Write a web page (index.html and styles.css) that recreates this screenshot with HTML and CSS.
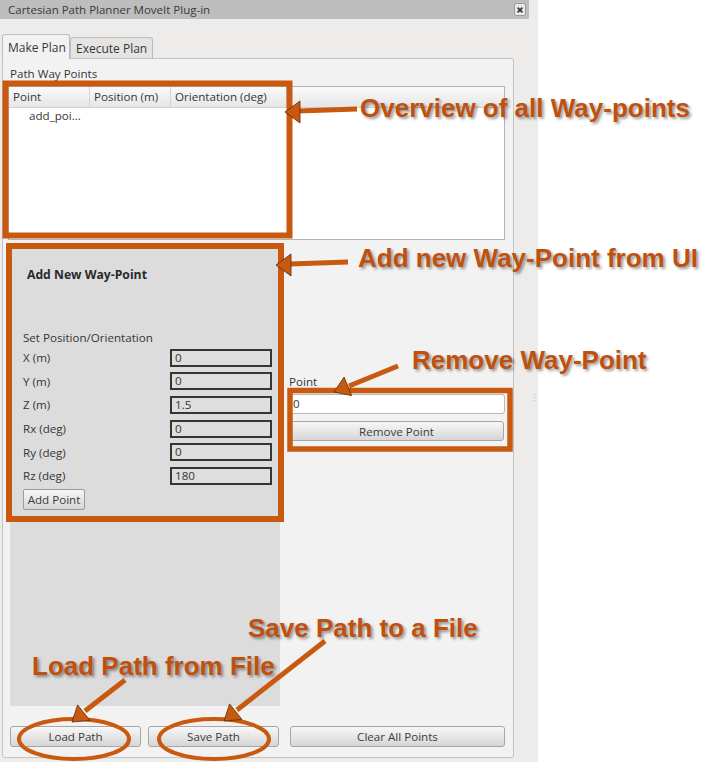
FILE: index.html
```html
<!DOCTYPE html>
<html lang="en">
<head>
    <meta charset="UTF-8">
    <meta name="viewport" content="width=device-width, initial-scale=1.0">
    <title>Cartesian Path Planner MoveIt Plug-in</title>
    <link rel="stylesheet" href="styles.css">
</head>
<body>
    <div class="window">
        <div class="titlebar">
            <span class="title">Cartesian Path Planner MoveIt Plug-in</span>
            <span class="close">
                <svg viewBox="0 0 10 10" width="8" height="8">
                    <path d="M2 2 L8 8 M8 2 L2 8" stroke="#333" stroke-width="2"/>
                </svg>
            </span>
        </div>

        <div class="tabs">
            <div class="tab active">Make Plan</div>
            <div class="tab">Execute Plan</div>
        </div>

        <div class="pane">
            <div class="group-title">Path Way Points</div>

            <div class="tree">
                <div class="tree-header">
                    <div class="col col-point">Point</div>
                    <div class="col col-pos">Position (m)</div>
                    <div class="col col-orient">Orientation (deg)</div>
                    <div class="col col-rest"></div>
                </div>
                <div class="tree-row">add_poi...</div>
            </div>

            <div class="lower">
                <div class="add-panel">
                    <div class="add-title">Add New Way-Point</div>
                    <div class="section-label">Set Position/Orientation</div>
                    <div class="coord-grid">
                        <span>X (m)</span><div class="coord-input">0</div>
                        <span>Y (m)</span><div class="coord-input">0</div>
                        <span>Z (m)</span><div class="coord-input">1.5</div>
                        <span>Rx (deg)</span><div class="coord-input">0</div>
                        <span>Ry (deg)</span><div class="coord-input">0</div>
                        <span>Rz (deg)</span><div class="coord-input">180</div>
                    </div>
                    <button class="btn btn-small">Add Point</button>
                </div>

                <div class="remove-col">
                    <div class="field-label">Point</div>
                    <div class="line-edit">0</div>
                    <button class="btn btn-wide">Remove Point</button>
                </div>

                <div class="grip">⋮</div>
            </div>

            <div class="bottom-buttons">
                <button class="btn btn-load">Load Path</button>
                <button class="btn btn-save">Save Path</button>
                <button class="btn btn-clear">Clear All Points</button>
            </div>
        </div>
    </div>

    <!-- callout marks drawn over the dialog -->
    <svg class="marks" width="709" height="762" viewBox="0 0 709 762">
        <g fill="none" stroke="#c8590f" stroke-width="6">
            <rect x="5.5" y="83.5" width="284" height="152"/>
            <rect x="9" y="246" width="272" height="273"/>
        </g>
        <rect x="290" y="390.5" width="220" height="58.5" fill="none" stroke="#c8590f" stroke-width="5.5"/>
        <g fill="none" stroke="#c8590f" stroke-width="4">
            <ellipse cx="74" cy="739" rx="55" ry="20"/>
            <ellipse cx="214" cy="739" rx="55" ry="20"/>
        </g>
        <g stroke="#c8590f" stroke-width="5" stroke-linecap="butt">
            <line x1="357" y1="109" x2="298" y2="111"/>
            <line x1="348" y1="262" x2="290" y2="264"/>
            <line x1="398" y1="366" x2="349" y2="386"/>
            <line x1="325" y1="641" x2="237" y2="710"/>
            <line x1="125" y1="680" x2="85" y2="711"/>
        </g>
        <g fill="#c8590f" stroke="#5a2a08" stroke-width="0.8" stroke-linejoin="round">
            <polygon points="285,112 300,101 300,123"/>
            <polygon points="276,265 291,254 291,276"/>
            <polygon points="334,392 351.7,395.6 344.1,377.1"/>
            <polygon points="224,721 242,719.5 229.6,703.9"/>
            <polygon points="72,722 90,720.5 77.6,704.9"/>
        </g>
    </svg>

    <div class="callout callout-overview">Overview of all Way-points</div>
    <div class="callout callout-add">Add new Way-Point from UI</div>
    <div class="callout callout-remove">Remove Way-Point</div>
    <div class="callout callout-save">Save Path to a File</div>
    <div class="callout callout-load">Load Path from File</div>
</body>
</html>
```

FILE: styles.css
```css
body {
    margin: 0;
    background: white;
    font-family: "Open Sans", "Noto Sans", sans-serif;
    font-size: 11.6px;
    color: #363636;
    position: relative;
    width: 709px;
    height: 762px;
    overflow: hidden;
}

.window {
    width: 538px;
    height: 762px;
    background: #edeceb;
}

/* title bar */
.titlebar {
    width: 529px;
    height: 19px;
    background: #bdbdbd;
    display: flex;
    align-items: center;
    justify-content: space-between;
}

.title {
    padding-left: 8px;
    font-size: 11.5px;
    color: #3a3a3a;
}

.close {
    width: 10px;
    height: 11px;
    margin-right: 3px;
    border: 1px solid #9a9a9a;
    border-radius: 2px;
    background: #e8e8e8;
    display: flex;
    align-items: center;
    justify-content: center;
}

/* tabs */
.tabs {
    display: flex;
    align-items: flex-end;
    margin-top: 14px;
    padding-left: 2px;
    height: 25px;
}

.tab {
    height: 21px;
    line-height: 21px;
    padding: 0 5px;
    border: 1px solid #bdbdbd;
    border-bottom: none;
    border-radius: 3px 3px 0 0;
    background: #e5e4e3;
    box-sizing: border-box;
    width: 83px;
    white-space: nowrap;
    font-size: 12px;
}

.tab.active {
    height: 25px;
    line-height: 25px;
    width: 68px;
    background: #f2f2f2;
    margin-bottom: -1px;
    position: relative;
    z-index: 1;
}

.pane {
    width: 512px;
    height: 700px;
    margin-left: 2px;
    box-sizing: border-box;
    border: 1px solid #c2c2c2;
    border-radius: 0 3px 3px 3px;
    background: #f2f2f2;
    padding: 0 8px 0 5px;
}

.group-title {
    height: 27px;
    padding-left: 2px;
    padding-top: 8px;
    box-sizing: border-box;
    line-height: 14px;
}

/* way point tree */
.tree {
    height: 154px;
    box-sizing: border-box;
    border: 1px solid #b4b4b4;
    background: white;
}

.tree-header {
    display: flex;
    height: 20px;
    background: linear-gradient(#fafafa, #e6e6e6);
    border-bottom: 1px solid #cfcfcf;
}

.col {
    line-height: 20px;
    padding-left: 4px;
    border-right: 1px solid #d4d4d4;
    box-sizing: border-box;
    white-space: nowrap;
}

.col-point { width: 81px; }
.col-pos { width: 81px; }
.col-orient { width: 116px; }
.col-rest { flex: 1; border-right: none; }

.tree-row {
    padding-left: 20px;
    line-height: 16px;
}

/* lower area */
.lower {
    display: flex;
    height: 462px;
    margin-top: 4px;
    position: relative;
}

.add-panel {
    width: 270px;
    margin-left: 2px;
    background: #dcdcdc;
    padding: 24px 0 0 13px;
    box-sizing: border-box;
}

.add-title {
    font-weight: bold;
    font-size: 12.2px;
    padding-left: 4px;
    line-height: 14px;
    color: #2a2a2a;
}

.section-label {
    margin-top: 49px;
    line-height: 14px;
}

.coord-grid {
    display: grid;
    grid-template-columns: 147px 102px;
    grid-auto-rows: 23.6px;
    align-items: center;
    margin-top: 1px;
}

.coord-input {
    height: 18px;
    line-height: 14px;
    box-sizing: border-box;
    border: 2px solid #353535;
    padding-left: 3px;
    background: #dedede;
}

.btn {
    font-family: inherit;
    font-size: 11.6px;
    color: #3c3c3c;
    border: 1px solid #a6a6a6;
    border-radius: 3px;
    background: linear-gradient(#f7f7f7, #d6d6d6);
    padding: 0;
    height: 21px;
    box-sizing: border-box;
}

.btn-small {
    margin-top: 1px;
    width: 62px;
    border-radius: 2px;
    border-color: #9c9c9c;
}

.remove-col {
    margin-left: 9px;
    width: 216px;
    padding-top: 131px;
    display: flex;
    flex-direction: column;
}

.field-label {
    line-height: 14px;
}

.line-edit {
    margin-top: 5px;
    height: 20px;
    line-height: 18px;
    box-sizing: border-box;
    border: 1px solid #b8b8b8;
    border-radius: 3px;
    background: white;
    padding-left: 3px;
}

.btn-wide {
    margin-top: 7px;
    height: 20px;
    width: 215px;
}

.grip {
    position: absolute;
    left: 522px;
    top: 147px;
    font-size: 9px;
    color: #b0b0b0;
}

.bottom-buttons {
    display: flex;
    margin-top: 20px;
    padding-left: 2px;
}

.btn-load { width: 131px; }
.btn-save { width: 131px; margin-left: 7px; }
.btn-clear { width: 215px; margin-left: 11px; }

/* annotations */
.marks {
    position: absolute;
    left: 0;
    top: 0;
    pointer-events: none;
}

.callout {
    position: absolute;
    font-family: "Liberation Sans", Arial, sans-serif;
    font-weight: bold;
    font-size: 26px;
    line-height: 26px;
    color: #c0500e;
    white-space: nowrap;
    text-shadow: 2px 2px 3px rgba(0, 0, 0, 0.4);
}

.callout-overview { left: 360px; top: 95px; }
.callout-add { left: 358px; top: 245px; }
.callout-remove { left: 412px; top: 347px; }
.callout-save { left: 248px; top: 615px; }
.callout-load { left: 32px; top: 653px; }
```
